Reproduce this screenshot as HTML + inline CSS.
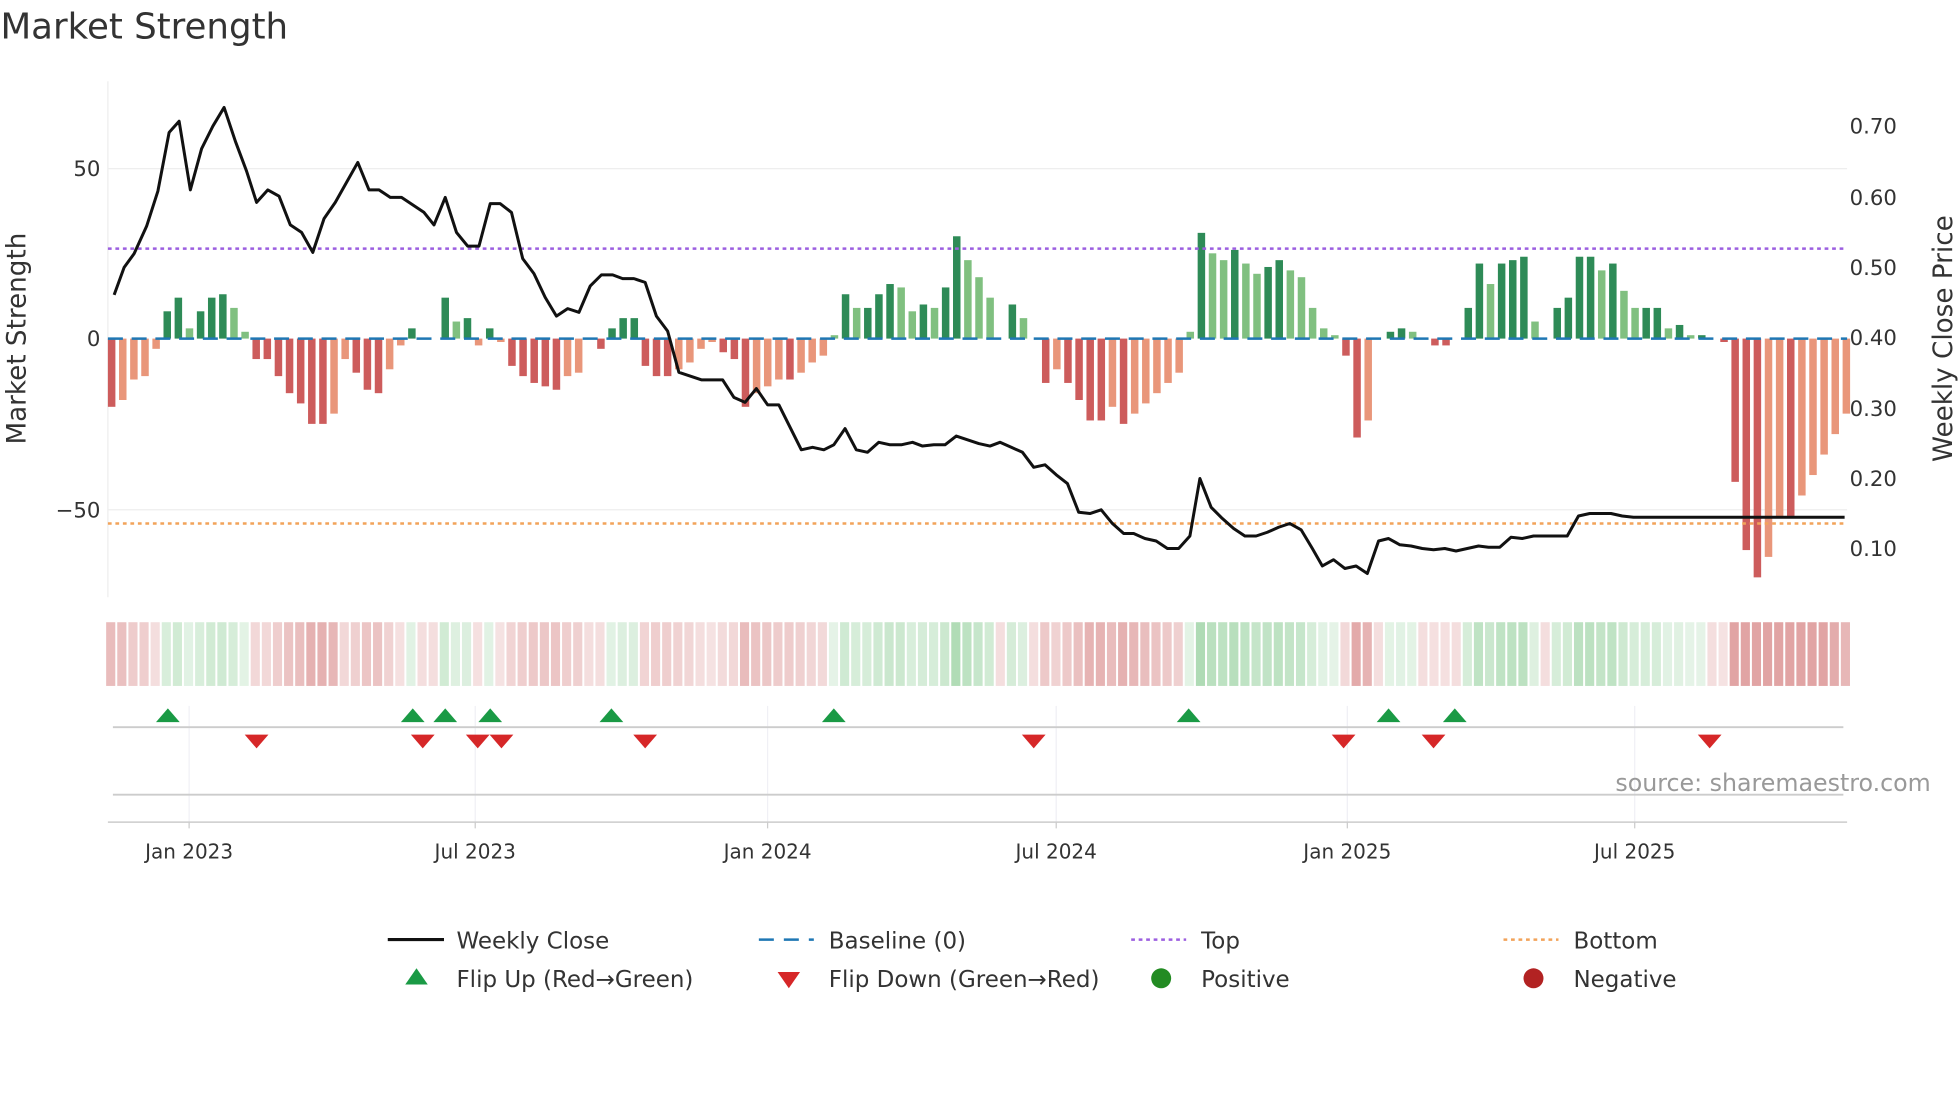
<!DOCTYPE html>
<html><head><meta charset="utf-8"><style>
html,body{margin:0;padding:0;background:#fff;width:1960px;height:1102px;overflow:hidden}
svg{display:block;font-family:"DejaVu Sans","Liberation Sans",sans-serif}
</style></head><body>
<svg id="s" width="1960" height="1102" viewBox="0 0 1568 882" xmlns="http://www.w3.org/2000/svg">
<rect width="1568" height="882" fill="#fff"/>
<text x="0" y="31" font-size="28.5" fill="#333">Market Strength</text>
<g id="grid">
<line x1="86" y1="65" x2="86" y2="478" stroke="#eee" stroke-width="1"/>
<line x1="86" y1="135" x2="1478" y2="135" stroke="#eee"/>
<line x1="86" y1="408" x2="1478" y2="408" stroke="#eee"/>
</g>
<g id="heat"></g>
<g id="bars"></g>
<line x1="86" y1="199" x2="1478" y2="199" stroke="#9c5fe0" stroke-width="2" stroke-dasharray="3,3"/>
<line x1="86" y1="419" x2="1478" y2="419" stroke="#f2a35a" stroke-width="2" stroke-dasharray="3,3"/>
<line x1="86" y1="271" x2="1478" y2="271" stroke="#1f77b4" stroke-width="2" stroke-dasharray="12,7"/>
<polyline id="price" fill="none" stroke="#111" stroke-width="2.4" stroke-linejoin="round"/>
<g font-size="17" fill="#333">
<text x="80" y="141" text-anchor="end">50</text>
<text x="80" y="277" text-anchor="end">0</text>
<text x="80" y="414" text-anchor="end">−50</text>
<text x="1480" y="107">0.70</text>
<text x="1480" y="164">0.60</text>
<text x="1480" y="220">0.50</text>
<text x="1480" y="276">0.40</text>
<text x="1480" y="333">0.30</text>
<text x="1480" y="389">0.20</text>
<text x="1480" y="445">0.10</text>
</g>
<text transform="translate(20,271) rotate(-90)" text-anchor="middle" font-size="21" fill="#333">Market Strength</text>
<text transform="translate(1562,271) rotate(-90)" text-anchor="middle" font-size="21" fill="#333">Weekly Close Price</text>
<g stroke="#f0f0f5">
<line x1="151" y1="565" x2="151" y2="660"/><line x1="380" y1="565" x2="380" y2="660"/><line x1="614" y1="565" x2="614" y2="660"/>
<line x1="845" y1="565" x2="845" y2="660"/><line x1="1078" y1="565" x2="1078" y2="660"/><line x1="1308" y1="565" x2="1308" y2="660"/>
</g>
<line x1="90" y1="582" x2="1475" y2="582" stroke="#ccc" stroke-width="1.5"/>
<line x1="90" y1="636" x2="1475" y2="636" stroke="#ccc" stroke-width="1.5"/>
<line x1="86" y1="658" x2="1478" y2="658" stroke="#ccc" stroke-width="1.2"/>
<g stroke="#ccc"><line x1="151" y1="658" x2="151" y2="663"/><line x1="380" y1="658" x2="380" y2="663"/><line x1="614" y1="658" x2="614" y2="663"/><line x1="845" y1="658" x2="845" y2="663"/><line x1="1078" y1="658" x2="1078" y2="663"/><line x1="1308" y1="658" x2="1308" y2="663"/></g>
<g id="flips"></g>
<text x="1545" y="633" text-anchor="end" font-size="19" fill="#999">source: sharemaestro.com</text>
<g font-size="16" fill="#333" text-anchor="middle">
<text x="151" y="687">Jan 2023</text><text x="380" y="687">Jul 2023</text><text x="614" y="687">Jan 2024</text>
<text x="845" y="687">Jul 2024</text><text x="1078" y="687">Jan 2025</text><text x="1308" y="687">Jul 2025</text>
</g>
<g font-size="18.4" fill="#333">
<line x1="310" y1="752" x2="355" y2="752" stroke="#111" stroke-width="2.5"/>
<text x="365" y="759">Weekly Close</text>
<line x1="607" y1="752" x2="651" y2="752" stroke="#1f77b4" stroke-width="2" stroke-dasharray="12,8"/>
<text x="663" y="759">Baseline (0)</text>
<line x1="905" y1="752" x2="949" y2="752" stroke="#9c5fe0" stroke-width="2" stroke-dasharray="3,3"/>
<text x="961" y="759">Top</text>
<line x1="1203" y1="752" x2="1247" y2="752" stroke="#f2a35a" stroke-width="2" stroke-dasharray="3,3"/>
<text x="1259" y="759">Bottom</text>
<polygon points="324,788 342,788 333,775" fill="#1a9a45"/>
<text x="365" y="790">Flip Up (Red→Green)</text>
<polygon points="622,778 640,778 631,791" fill="#d62728"/>
<text x="663" y="790">Flip Down (Green→Red)</text>
<circle cx="929" cy="783" r="8" fill="#228b22"/>
<text x="961" y="790">Positive</text>
<circle cx="1227" cy="783" r="8" fill="#b22222"/>
<text x="1259" y="790">Negative</text>
</g>
</svg>
<script>
var NS="http://www.w3.org/2000/svg";
function el(p,t,a){var e=document.createElementNS(NS,t);for(var k in a)e.setAttribute(k,a[k]);p.appendChild(e);return e;}
var v=[-20,-18,-12,-11,-3,8,12,3,8,12,13,9,2,-6,-6,-11,-16,-19,-25,-25,-22,-6,-10,-15,-16,-9,-2,3,0,0,12,5,6,-2,3,-1,-8,-11,-13,-14,-15,-11,-10,0,-3,3,6,6,-8,-11,-11,-9,-7,-3,-1,-4,-6,-20,-16,-14,-12,-12,-10,-7,-5,1,13,9,9,13,16,15,8,10,9,15,30,23,18,12,0,10,6,0,-13,-9,-13,-18,-24,-24,-20,-25,-22,-19,-16,-13,-10,2,31,25,23,26,22,19,21,23,20,18,9,3,1,-5,-29,-24,0,2,3,2,0,-2,-2,0,9,22,16,22,23,24,5,0,9,12,24,24,20,22,14,9,9,9,3,4,1,1,0,-1,-42,-62,-70,-64,-52,-52,-46,-40,-34,-28,-22];
var bars=document.getElementById("bars"),heat=document.getElementById("heat");
for(var i=0;i<v.length;i++){
 var x=89+i*8.9,val=v[i],prev=i?v[i-1]:0;
 var rising=Math.abs(val)>=Math.abs(prev);
 var c;
 if(val>0)c=rising?"#2e8b57":"#80c080";else c=rising?"#cd5c5c":"#e9967a";
 var h=Math.abs(val)*2.73;
 if(val!==0)el(bars,"rect",{x:x-3,y:val>0?271-h:271,width:6,height:h,fill:c});
 var a=Math.min(1,0.3+Math.abs(val)/45);
 var hc=val>=0?"rgba(120,195,130,"+(a*0.6)+")":"rgba(200,90,90,"+(a*0.55)+")";
 if(val==0)hc="rgba(200,90,90,0.2)";
 el(heat,"rect",{x:x-4.4,y:498,width:7.3,height:51,fill:hc});
}
var pts=[[91,236],[99,214],[107,203],[117,181],[126,153],[135,106],[143,97],[152,152],[161,119],[170,101],[179,86],[188,113],[197,137],[205,162],[214,152],[223,157],[232,180],[241,186],[250,202],[259,175],[268,162],[277,146],[286,130],[295,152],[303,152],[312,158],[321,158],[330,164],[339,170],[347,180],[356,158],[365,186],[374,197],[383,197],[392,163],[400,163],[409,170],[418,207],[427,219],[436,238],[445,253],[454,247],[463,250],[472,229],[481,220],[490,220],[498,223],[507,223],[516,226],[525,253],[534,265],[543,298],[552,301],[561,304],[570,304],[578,304],[587,318],[596,322],[605,311],[614,324],[623,324],[632,342],[641,360],[650,358],[659,360],[667,356],[676,343],[685,360],[694,362],[703,354],[712,356],[721,356],[730,354],[738,357],[747,356],[756,356],[765,349],[774,352],[783,355],[792,357],[800,354],[809,358],[818,362],[827,374],[836,372],[845,380],[854,387],[863,410],[872,411],[881,408],[890,419],[899,427],[907,427],[916,431],[925,433],[934,439],[943,439],[952,429],[960,383],[969,406],[978,415],[987,423],[996,429],[1005,429],[1014,426],[1023,422],[1032,419],[1041,424],[1050,439],[1058,453],[1067,448],[1076,455],[1085,453],[1094,459],[1103,433],[1111,431],[1120,436],[1129,437],[1138,439],[1147,440],[1156,439],[1165,441],[1174,439],[1183,437],[1191,438],[1200,438],[1209,430],[1218,431],[1227,429],[1236,429],[1245,429],[1254,429],[1263,413],[1272,411],[1280,411],[1289,411],[1298,413],[1307,414],[1476,414]];
document.getElementById("price").setAttribute("points",pts.map(function(p){return p.join(",")}).join(" "));
var f=document.getElementById("flips");
[134,330,356,392,489,667,951,1111,1164].forEach(function(x){el(f,"polygon",{points:(x-9.5)+",578 "+(x+9.5)+",578 "+x+",567",fill:"#1a9a45"})});
[205,338,382,401,516,827,1075,1147,1368].forEach(function(x){el(f,"polygon",{points:(x-9.5)+",588 "+(x+9.5)+",588 "+x+",599",fill:"#d62728"})});
</script>
</body></html>
